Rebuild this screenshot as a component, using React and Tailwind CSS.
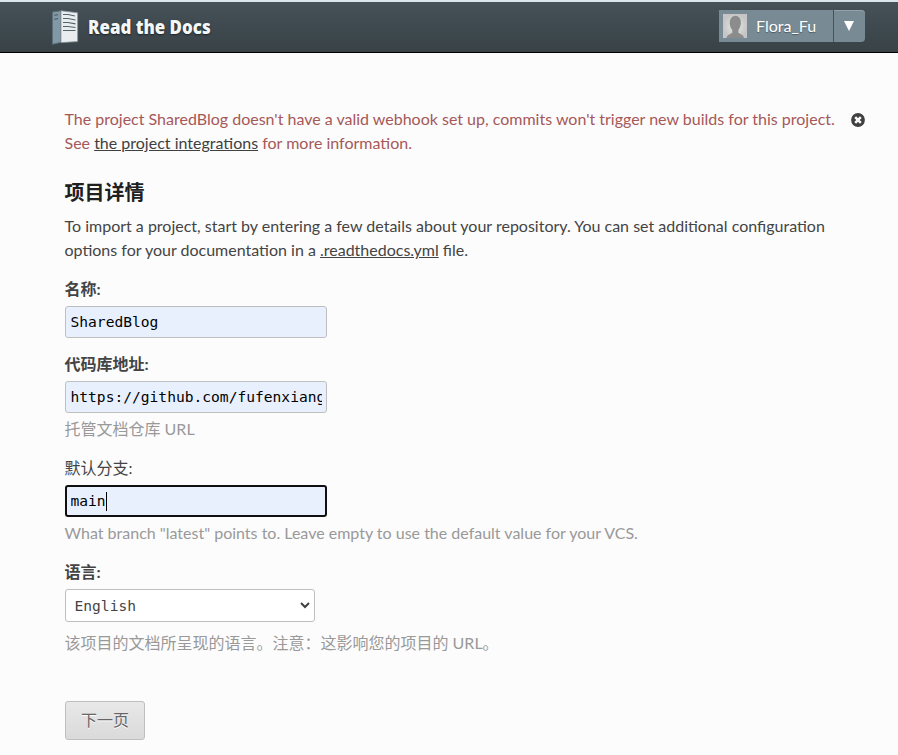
const sans = "font-['Lato','Noto_Sans_CJK_SC',sans-serif]";
const mono = "font-['DejaVu_Sans_Mono',monospace] text-[14.6px]";

function Logo() {
  return (
    <svg width="27" height="36" viewBox="0 0 27 36" className="shrink-0">
      <path d="M0.5 2 L9 0.8 V32.3 L0.5 34.3 Z" fill="#8199a7" stroke="#5c6e78" strokeWidth="1" />
      <path d="M9 0.8 L25.6 2.8 V31.6 L9 32.6 Z" fill="#e9edef" stroke="#8a979e" strokeWidth="0.8" />
      <g stroke="#56636b" strokeWidth="1.2" fill="none">
        <path d="M2.3 5.3 L6 4.7 M2.3 9.3 L6 8.7" />
        <path d="M11 4.5 H16 L23 6 M11 8.5 H16 L23.5 10 M11 12.5 H16 L23.5 13.8 M11 16.5 H16 L23.5 17.5 M11 20.5 H23.5" />
      </g>
    </svg>
  );
}

function Header() {
  return (
    <header className="flex h-[53px] items-start justify-between border-t-2 border-b border-t-[#dce5ea] border-b-black bg-linear-to-b from-[#465158] to-[#384247] pl-[52px] pr-[33px]">
      <div className="flex pt-2">
        <Logo />
        <span className="ml-[9px] mt-px w-[126px] origin-left scale-x-[0.845] whitespace-nowrap font-['Open_Sans',sans-serif] text-[20px] leading-8 font-extrabold text-[#f4f7f8] [text-shadow:0_1px_2px_#1c2225]">
          Read the Docs
        </span>
      </div>
      <div className="mt-2 flex h-8 text-white">
        <div className="flex w-[114px] items-center bg-[#788b95] pl-1">
          <svg width="24" height="24" viewBox="0 0 24 24">
            <defs>
              <radialGradient id="portrait">
                <stop offset="0" stopColor="#e8e8e8" />
                <stop offset="1" stopColor="#c6c6c6" />
              </radialGradient>
            </defs>
            <rect width="24" height="24" fill="url(#portrait)" />
            <path d="M3.5 24 C4 20.5 7.5 20.5 9.3 18.8 V16 C5.5 12 5.5 1.8 12.4 1.8 C19.3 1.8 19 12 15.4 16 V18.8 C17.5 20.5 20.5 20.5 21 24 Z" fill="#8c8c8c" />
          </svg>
          <span className="ml-[9px] text-[16px] leading-6 [text-shadow:0_1px_1px_#4b5a62]">Flora_Fu</span>
        </div>
        <div className="flex w-8 items-center justify-center rounded-r border-l border-[#45525a] bg-[#788b95] shadow-[inset_0_1px_0_#93a2aa]">
          <svg width="10" height="10" viewBox="0 0 10 10" className="mr-px"><path d="M0 0 H10 L5 10 Z" fill="#fff" /></svg>
        </div>
      </div>
    </header>
  );
}

function Notice() {
  return (
    <div className="flex justify-between text-[#a55858]">
      <p className="whitespace-nowrap">
        The project SharedBlog doesn't have a valid webhook set up, commits won't trigger new builds for this project.
        <br />
        See <a className="text-[#404040] underline">the project integrations</a> for more information.
      </p>
      <svg width="14" height="14" viewBox="0 0 14 14" className="mt-[6px]">
        <circle cx="7" cy="7" r="6.9" fill="#404040" />
        <path d="M4.2 4.2 L9.8 9.8 M9.8 4.2 L4.2 9.8" stroke="#fcfcfc" strokeWidth="2.5" />
      </svg>
    </div>
  );
}

function TextField({ value, focused }) {
  return (
    <div
      className={`${mono} flex h-8 w-[262px] items-center rounded-[3px] bg-[#e8f0fe] text-black ${
        focused ? "border-2 border-[#101010] px-[3.5px]" : "border border-[#bfbfbf] px-[4.5px]"
      }`}
    >
      <span className="overflow-hidden whitespace-nowrap leading-6">{value}</span>
      {focused && <span className="h-[19px] w-px bg-black" />}
    </div>
  );
}

export default function App() {
  return (
    <div className={`${sans} min-h-[755px] w-[898px] overflow-hidden bg-[#fcfcfc] text-[16px] leading-6 text-[#444]`}>
      <Header />
      <main className="pt-[54px] pl-[64.5px] pr-[33px]">
        <Notice />
        <h2 className="mt-6 text-[20px] leading-[26px] font-bold text-[#202020]">项目详情</h2>
        <p className="mt-[9px] whitespace-nowrap">
          To import a project, start by entering a few details about your repository. You can set additional configuration
          <br />
          options for your documentation in a <a className="underline">.readthedocs.yml</a> file.
        </p>
        <form>
          <label className="mt-[15px] block font-bold">名称:</label>
          <div className="mt-[5px] ml-[0.5px]"><TextField value="SharedBlog" /></div>
          <label className="mt-[14px] block font-bold">代码库地址:</label>
          <div className="mt-[5px] ml-[0.5px]"><TextField value="https://github.com/fufenxiang" /></div>
          <p className="mt-1 text-[#999]">托管文档仓库 URL</p>
          <label className="mt-[15px] block">默认分支:</label>
          <div className="mt-[5px] ml-[0.5px]"><TextField value="main" focused /></div>
          <p className="mt-1 text-[#999]">What branch "latest" points to. Leave empty to use the default value for your VCS.</p>
          <label className="mt-[15px] block font-bold">语言:</label>
          <div className={`${mono} mt-[5px] ml-[0.5px] flex h-[33px] w-[250px] items-center justify-between rounded-[3px] border border-[#bfbfbf] bg-white pr-1 pl-[8.5px]`}>
            <span>English</span>
            <svg width="10" height="7" viewBox="0 0 10 7"><path d="M1 1 L5 5 L9 1" fill="none" stroke="#404040" strokeWidth="2" /></svg>
          </div>
          <p className="mt-[9px] text-[#999]">该项目的文档所呈现的语言。注意：这影响您的项目的 URL。</p>
          <button type="button" className="mt-[46px] ml-[0.5px] flex h-[39px] w-20 items-center justify-center rounded-[3px] border border-[#bfbfbf] bg-linear-to-b from-[#e8e8e8] to-[#dadada] pb-px text-[#666] [text-shadow:0_1px_0_#fff]">
            下一页
          </button>
        </form>
      </main>
    </div>
  );
}
